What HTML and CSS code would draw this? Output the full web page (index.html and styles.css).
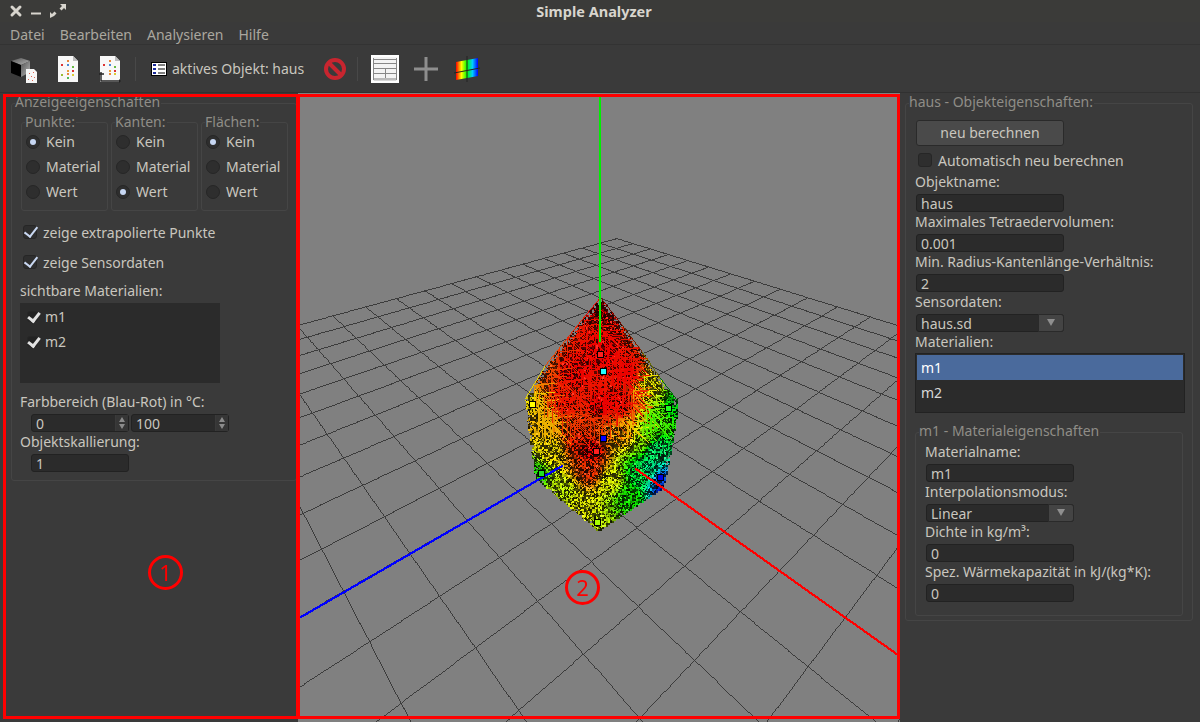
FILE: index.html
```html
<!DOCTYPE html>
<html lang="de">
<head>
    <meta charset="UTF-8">
    <title>Simple Analyzer</title>
    <link rel="stylesheet" href="styles.css">
</head>
<body>

<div class="titlebar">
    <div class="winbtns">
        <svg width="14" height="14" viewBox="0 0 14 14"><path d="M3 3l8 8M11 3l-8 8" stroke="#d8d5ce" stroke-width="3" stroke-linecap="round"/></svg>
        <svg width="14" height="14" viewBox="0 0 14 14"><path d="M2 9.500h10" stroke="#d8d5ce" stroke-width="2"/></svg>
        <svg width="18" height="16" viewBox="0 0 18 16"><path d="M11 1h6v6l-2-2-2.500 2.500-2-2L13 3zM1 15v-6l2 2 2.500-2.500 2 2L5 13z" fill="#d8d5ce"/></svg>
    </div>
    <div class="title">Simple Analyzer</div>
</div>

<div class="menubar">
    <span>Datei</span>
    <span>Bearbeiten</span>
    <span>Analysieren</span>
    <span>Hilfe</span>
</div>

<div class="toolbar">
    <svg class="tool-cube" width="28" height="28" viewBox="0 0 28 28">
        <defs>
            <linearGradient id="cubeTop" x1="0" y1="0" x2="1" y2="1">
                <stop offset="0" stop-color="#555"/>
                <stop offset="1" stop-color="#b5b5b5"/>
            </linearGradient>
        </defs>
        <path d="M1 6l10-3 9 3-9 4z" fill="url(#cubeTop)"/>
        <path d="M1 6l10 4v12L1 18z" fill="#000"/>
        <path d="M11 10l9-4v11l-9 5z" fill="url(#cubeTop)"/>
        <path d="M16 14h8l3 3v11H16z" fill="#f6f6f6"/>
        <path d="M19 18h1v1h-1zM23 17h1v1h-1zM21 21h1v1h-1zM24 22h1v1h-1zM18 24h1v1h-1zM22 25h1v1h-1z" fill="#d65"/>
    </svg>
    <svg class="tool-doc" width="22" height="28" viewBox="0 0 22 28">
        <path d="M1 1h15l5 5v21H1z" fill="#f8f8f8"/>
        <path d="M16 1v5h5z" fill="#bbb"/>
        <g>
            <rect x="10" y="5" width="2" height="2" fill="#e8873a"/><rect x="4" y="9" width="2" height="2" fill="#d33"/>
            <rect x="10" y="9" width="2" height="2" fill="#4a8ad4"/><rect x="15" y="11" width="2" height="2" fill="#6b4"/>
            <rect x="10" y="15" width="2" height="2" fill="#e8a03a"/><rect x="15" y="15" width="2" height="2" fill="#d33"/>
            <rect x="10" y="18" width="2" height="2" fill="#e8873a"/><rect x="4" y="19" width="2" height="2" fill="#9b3"/>
            <rect x="15" y="19" width="2" height="2" fill="#dc3"/><rect x="10" y="22" width="2" height="2" fill="#5b5"/>
        </g>
    </svg>
    <svg class="tool-doc2" width="22" height="28" viewBox="0 0 22 28">
        <path d="M1 1h15l5 5v21H1z" fill="#f8f8f8"/>
        <path d="M16 1v5h5z" fill="#bbb"/>
        <g>
            <rect x="10" y="5" width="2" height="2" fill="#e8873a"/><rect x="4" y="9" width="2" height="2" fill="#d33"/>
            <rect x="10" y="9" width="2" height="2" fill="#4a8ad4"/><rect x="15" y="11" width="2" height="2" fill="#6b4"/>
            <rect x="10" y="15" width="2" height="2" fill="#e8a03a"/><rect x="15" y="15" width="2" height="2" fill="#d33"/>
            <rect x="10" y="18" width="2" height="2" fill="#e8873a"/><rect x="15" y="18" width="2" height="2" fill="#dc3"/>
        </g>
        <path d="M2 17v9h18M0 19h5" stroke="#222" stroke-width="1.400" fill="none"/>
        <path d="M20 24l2 2-2 2z" fill="#222"/>
    </svg>
    <div class="tool-sep sep-a"></div>
    <svg class="tool-list" width="16" height="14" viewBox="0 0 16 14">
        <rect x="0.500" y="0.500" width="15" height="13" fill="#fff" stroke="#000"/>
        <path d="M2 2h3v2H2zM2 6h3v2H2zM2 10h3v2H2z" fill="#1a2a9c"/>
        <path d="M7 3h7M7 7h7M7 11h7" stroke="#000"/>
    </svg>
    <span class="tool-text">aktives Objekt: haus</span>
    <svg class="tool-stop" width="24" height="24" viewBox="0 0 24 24">
        <circle cx="12" cy="12" r="9" fill="none" stroke="#c8252f" stroke-width="4"/>
        <path d="M6 6l12 12" stroke="#c8252f" stroke-width="4"/>
    </svg>
    <div class="tool-sep sep-b"></div>
    <svg class="tool-table" width="28" height="28" viewBox="0 0 28 28">
        <rect x="1" y="1" width="26" height="26" fill="#f4f4f4" stroke="#fff" stroke-width="2"/>
        <path d="M2.500 4.500h23M2.500 8.500h23M2.500 13.500h23M2.500 18.500h23M2.500 23.500h23M14.500 13v11M2.500 3v22M25.500 3v22" stroke="#888" fill="none"/>
        <rect x="3" y="23" width="22" height="2.500" fill="#bbb"/>
    </svg>
    <svg class="tool-plus" width="26" height="26" viewBox="0 0 26 26">
        <path d="M13 1v24M1 13h24" stroke="#8e8e8e" stroke-width="3"/>
    </svg>
    <svg class="tool-color" width="28" height="28" viewBox="0 0 28 28">
        <defs>
            <linearGradient id="spectrum" x1="0" y1="0" x2="1" y2="0">
                <stop offset="0" stop-color="#f00"/>
                <stop offset="0.250" stop-color="#ff0"/>
                <stop offset="0.500" stop-color="#0f0"/>
                <stop offset="0.750" stop-color="#0cf"/>
                <stop offset="1" stop-color="#00f"/>
            </linearGradient>
        </defs>
        <path d="M3 7l22-4v18L3 25z" fill="url(#spectrum)"/>
        <path d="M1 18l26-5M14 1v26" stroke="#222" fill="none"/>
    </svg>
</div>

<div class="main">
    <div class="panel panel-left">
        <div class="group group-display">
            <div class="group-title">Anzeigeeigenschaften</div>
            <div class="radio-groups">
                <div class="group radio-box">
                    <div class="group-title">Punkte:</div>
                    <div class="row-radio"><i class="radio on"></i>Kein</div>
                    <div class="row-radio"><i class="radio"></i>Material</div>
                    <div class="row-radio"><i class="radio"></i>Wert</div>
                </div>
                <div class="group radio-box">
                    <div class="group-title">Kanten:</div>
                    <div class="row-radio"><i class="radio"></i>Kein</div>
                    <div class="row-radio"><i class="radio"></i>Material</div>
                    <div class="row-radio"><i class="radio on"></i>Wert</div>
                </div>
                <div class="group radio-box">
                    <div class="group-title">Flächen:</div>
                    <div class="row-radio"><i class="radio on"></i>Kein</div>
                    <div class="row-radio"><i class="radio"></i>Material</div>
                    <div class="row-radio"><i class="radio"></i>Wert</div>
                </div>
            </div>
            <div class="checks">
                <div class="row-check"><i class="check on"></i>zeige extrapolierte Punkte</div>
                <div class="row-check"><i class="check on"></i>zeige Sensordaten</div>
            </div>
            <div class="label visible-label">sichtbare Materialien:</div>
            <div class="mat-list">
                <div class="mat-item"><i class="check on small"></i>m1</div>
                <div class="mat-item"><i class="check on small"></i>m2</div>
            </div>
            <div class="label range-label">Farbbereich (Blau-Rot) in °C:</div>
            <div class="spin-row">
                <div class="spin"><span>0</span><b class="spin-arrows"></b></div>
                <div class="spin"><span>100</span><b class="spin-arrows"></b></div>
            </div>
            <div class="label">Objektskallierung:</div>
            <div class="field short">1</div>
        </div>
    </div>

    <div class="viewport">
        <canvas id="view" width="602" height="629"></canvas>
    </div>

    <div class="panel panel-right">
        <div class="group group-object">
            <div class="group-title">haus - Objekteigenschaften:</div>
            <div class="button">neu berechnen</div>
            <div class="row-check auto-check"><i class="check"></i>Automatisch neu berechnen</div>
            <div class="label first-label">Objektname:</div>
            <div class="field">haus</div>
            <div class="label">Maximales Tetraedervolumen:</div>
            <div class="field">0.001</div>
            <div class="label">Min. Radius-Kantenlänge-Verhältnis:</div>
            <div class="field">2</div>
            <div class="label">Sensordaten:</div>
            <div class="combo"><span>haus.sd</span><b class="combo-btn"></b></div>
            <div class="label">Materialien:</div>
            <div class="obj-list">
                <div class="obj-item selected">m1</div>
                <div class="obj-item">m2</div>
            </div>
            <div class="group group-material">
                <div class="group-title">m1 - Materialeigenschaften</div>
                <div class="label">Materialname:</div>
                <div class="field">m1</div>
                <div class="label">Interpolationsmodus:</div>
                <div class="combo"><span>Linear</span><b class="combo-btn"></b></div>
                <div class="label">Dichte in kg/m³:</div>
                <div class="field">0</div>
                <div class="label">Spez. Wärmekapazität in kJ/(kg*K):</div>
                <div class="field">0</div>
            </div>
        </div>
    </div>

    <div class="frame frame-one"></div>
    <div class="frame frame-two"></div>
    <div class="mark mark-one">1</div>
    <div class="mark mark-two">2</div>
</div>

<script src="view.js"></script>
</body>
</html>
```

FILE: styles.css
```css
* {
    box-sizing: border-box;
}
html, body {
    margin: 0;
    height: 100%;
    overflow: hidden;
}
body {
    width: 1200px;
    height: 722px;
    font-family: "Noto Sans", "Open Sans", sans-serif;
    font-size: 14px;
    color: #c9c6bf;
    background-color: #3a3a3a;
}
.titlebar {
    display: flex;
    align-items: center;
    position: relative;
    height: 22px;
    background-color: #3b3b39;
}
.winbtns {
    display: flex;
    align-items: center;
    gap: 6px;
    padding-left: 9px;
}
.title {
    position: absolute;
    left: 0;
    right: 12px;
    text-align: center;
    font-weight: bold;
    font-size: 14.5px;
    color: #d8d5ce;
}
.menubar {
    display: flex;
    gap: 15px;
    height: 23px;
    padding: 1px 0 0 10px;
    line-height: 23px;
    color: #aaa79f;
    border-bottom: 1px solid #333;
}
.toolbar {
    display: flex;
    align-items: center;
    height: 48px;
    background-color: #3a3a3a;
    border-bottom: 1px solid #313131;
}
.tool-cube { margin-left: 10px; }
.tool-doc { margin-left: 19px; }
.tool-doc2 { margin-left: 20px; }
.tool-sep {
    width: 1px;
    height: 24px;
    background-color: #484848;
}
.sep-a { margin-left: 14px; }
.tool-list { margin-left: 15px; }
.tool-text {
    margin-left: 5px;
    color: #c9c6bf;
}
.tool-stop { margin-left: 19px; }
.sep-b { margin-left: 10px; }
.tool-table { margin-left: 13px; }
.tool-plus { margin-left: 14px; }
.tool-color { margin-left: 14px; }

.main {
    display: flex;
    position: relative;
    height: 629px;
}
.panel {
    padding-top: 10px;
}
.panel-left {
    width: 298px;
    padding-left: 11px;
    padding-right: 1px;
}
.panel-right {
    width: 300px;
    padding-left: 5px;
    padding-right: 7px;
}
.viewport {
    width: 602px;
    background-color: #808080;
}
#view {
    display: block;
}
.group {
    position: relative;
    border: 1px solid #454545;
    border-radius: 3px;
}
.group-title {
    position: absolute;
    top: -10px;
    left: 3px;
    height: 16px;
    padding-right: 1px;
    line-height: 16px;
    white-space: nowrap;
    color: #8f8d87;
    background-color: #3a3a3a;
}
.radio-box .group-title {
    top: -9px;
}
.group-display {
    height: 378px;
    padding: 18px 0 0 8px;
}
.radio-groups {
    display: flex;
    gap: 3px;
    padding-left: 1px;
}
.radio-box {
    width: 87px;
    height: 89px;
    padding: 6px 0 0 4px;
}
.row-radio {
    display: flex;
    align-items: center;
    gap: 6px;
    height: 25px;
}
.radio {
    position: relative;
    width: 14px;
    height: 14px;
    border: 1px solid #262626;
    border-radius: 50%;
    background-color: #2e2e2e;
}
.radio.on::after {
    content: "";
    position: absolute;
    left: 3px;
    top: 3px;
    width: 6px;
    height: 6px;
    border-radius: 50%;
    background-color: #c6d6f2;
}
.checks {
    margin: 6px 0 0 3px;
}
.row-check {
    display: flex;
    align-items: center;
    gap: 6px;
    height: 30px;
}
.check {
    position: relative;
    width: 14px;
    height: 14px;
    border: 1px solid #262626;
    border-radius: 3px;
    background-color: #2e2e2e;
}
.check.on::after {
    content: "";
    position: absolute;
    left: 3px;
    top: -2px;
    width: 6px;
    height: 11px;
    border: solid #c9d8f2;
    border-width: 0 2px 2px 0;
    transform: rotate(38deg);
}
.check.small {
    width: 11px;
    height: 11px;
    background-color: #222;
}
.check.small::after {
    left: 2px;
    top: -2px;
    width: 5px;
    height: 9px;
    border-color: #e2e2e2;
    border-width: 0 3px 3px 0;
}
.label {
    height: 20px;
    line-height: 20px;
    white-space: nowrap;
}
.visible-label {
    margin-top: 4px;
}
.mat-list {
    width: 200px;
    height: 80px;
    margin-top: 2px;
    padding-top: 1px;
    background-color: #2b2b2b;
}
.mat-item {
    display: flex;
    align-items: center;
    gap: 7px;
    height: 25px;
    padding-left: 7px;
}
.range-label {
    margin-top: 9px;
}
.spin-row {
    display: flex;
    gap: 2px;
    margin: 2px 0 0 11px;
}
.spin, .field, .combo {
    display: flex;
    align-items: center;
    height: 18px;
    background-color: #2b2b2b;
    border: 1px solid #222;
    border-radius: 3px;
}
.spin {
    justify-content: space-between;
    width: 98px;
    padding-left: 4px;
}
.spin-arrows {
    position: relative;
    width: 13px;
    height: 16px;
    border-left: 1px solid #3a3a3a;
    background-color: #363636;
}
.spin-arrows::before, .spin-arrows::after {
    content: "";
    position: absolute;
    left: 3px;
    border: 3px solid transparent;
}
.spin-arrows::before {
    top: -1px;
    border-bottom: 5px solid #8c8c8c;
}
.spin-arrows::after {
    bottom: -1px;
    border-top: 5px solid #8c8c8c;
}
.field {
    width: 148px;
    margin: 2px 0 0 1px;
    padding-left: 4px;
}
.field.short {
    width: 98px;
    margin-left: 11px;
}
.combo {
    justify-content: space-between;
    width: 148px;
    margin: 2px 0 0 1px;
    padding-left: 4px;
}
.combo-btn {
    position: relative;
    width: 26px;
    height: 18px;
    margin-right: -1px;
    background-color: #444;
    border: 1px solid #2a2a2a;
    border-radius: 0 3px 3px 0;
}
.combo-btn::after {
    content: "";
    position: absolute;
    left: 8px;
    top: 4px;
    border: 4px solid transparent;
    border-top: 7px solid #8f8f8f;
    border-bottom: 0;
}
.group-object {
    height: 518px;
    padding: 16px 0 0 9px;
}
.button {
    width: 148px;
    height: 26px;
    margin-left: 1px;
    line-height: 24px;
    text-align: center;
    background-color: #4a4a4a;
    border: 1px solid #2a2a2a;
    border-radius: 3px;
}
.auto-check {
    height: 20px;
    margin: 4px 0 0 3px;
}
.first-label {
    margin-top: 2px;
}
.obj-list {
    width: 270px;
    height: 60px;
    margin-top: 1px;
    padding: 1px;
    background-color: #2b2b2b;
    border: 1px solid #222;
}
.obj-item {
    height: 25px;
    padding-left: 4px;
    line-height: 25px;
    color: #d8d8d8;
}
.obj-item.selected {
    color: #fff;
    background-color: #4a6a9c;
}
.group-material {
    width: 268px;
    height: 184px;
    margin-top: 19px;
    padding: 9px 0 0 9px;
}
.frame {
    position: absolute;
    top: 1px;
    height: 625px;
    border: 3px solid #f00;
}
.frame-one {
    left: 3px;
    width: 296px;
}
.frame-two {
    left: 297px;
    width: 603px;
}
.mark {
    position: absolute;
    width: 35px;
    height: 35px;
    line-height: 29px;
    text-align: center;
    font-size: 22px;
    color: #f00;
    border: 3px solid #f00;
    border-radius: 50%;
}
.mark-one {
    left: 148px;
    top: 462px;
}
.mark-two {
    left: 565px;
    top: 477px;
}
```

FILE: view.js
```js
// 3D-Ansicht: Gitter, Achsen und das gefaerbte Hausmodell
var canvas = document.getElementById("view");
var ctx = canvas.getContext("2d");
var OX = 298, OY = 93; // Versatz der Canvas im Fenster

var seed = 12345;
function rnd() {
    seed = (seed * 1664525 + 1013904223) % 4294967296;
    return seed / 4294967296;
}

function dot(x, y, s, col) {
    ctx.fillStyle = col;
    ctx.fillRect(Math.round(x - OX), Math.round(y - OY), s, s);
}

// Linie ohne Kantenglaettung
function line(x0, y0, x1, y1, s, col) {
    var n = Math.ceil(Math.max(Math.abs(x1 - x0), Math.abs(y1 - y0)));
    for (var i = 0; i <= n; i++) {
        dot(x0 + (x1 - x0) * i / n, y0 + (y1 - y0) * i / n, s, col);
    }
}

// Bodenebene -> Bild
function project(u, v) {
    var w = 1 - 0.0636 * u - 0.056 * v;
    return {
        x: 600 + (33.4 * u - 37 * v) / w,
        y: 443 + (23.7 * u + 21.3 * v) / w,
        w: w
    };
}

function groundLine(u0, v0, u1, v1) {
    var steps = 60, last = null;
    for (var i = 0; i <= steps; i++) {
        var p = project(u0 + (u1 - u0) * i / steps, v0 + (v1 - v0) * i / steps);
        if (p.w < 0.12) break;
        if (last) line(last.x, last.y, p.x, p.y, 1, "#3c3c3c");
        last = p;
    }
}

for (var k = -10; k <= 10; k++) {
    groundLine(-10, k, 10, k);
    groundLine(k, -10, k, 10);
}

var outline = [[600,297],[622,325],[642,352],[660,378],[677,400],[676,420],[669,460],[663,487],[598,531],[585,520],[535,478],[528,430],[525,398],[545,365],[565,340],[585,315]];

function inside(x, y) {
    var c = false;
    for (var i = 0, j = outline.length - 1; i < outline.length; j = i++) {
        var a = outline[i], b = outline[j];
        if ((a[1] > y) != (b[1] > y) && x < (b[0] - a[0]) * (y - a[1]) / (b[1] - a[1]) + a[0]) c = !c;
    }
    return c;
}

function edgeDist(x, y) {
    var best = 1e9;
    for (var i = 0, j = outline.length - 1; i < outline.length; j = i++) {
        var a = outline[i], b = outline[j];
        var dx = b[0] - a[0], dy = b[1] - a[1];
        var t = Math.max(0, Math.min(1, ((x - a[0]) * dx + (y - a[1]) * dy) / (dx * dx + dy * dy)));
        best = Math.min(best, Math.hypot(x - a[0] - t * dx, y - a[1] - t * dy));
    }
    return best;
}

// Stuetzstellen der Farbskala: x, y, Farbton
var anchors = [
    [600,297,0],[600,350,0],[600,400,0],[590,450,0],[590,470,12],[570,370,0],[625,370,0],[560,400,4],[620,400,2],
    [545,365,18],[575,440,8],[525,400,55],[540,420,45],[550,450,55],[533,473,112],[560,490,72],[597,530,72],[580,510,62],
    [663,490,235],[660,478,220],[650,470,155],[640,475,135],[630,495,115],[655,450,145],
    [677,405,125],[640,440,85],[655,420,105],[625,435,40],[610,480,65],[645,385,60]
];

function hue(x, y) {
    var sum = 0, weight = 0;
    for (var i = 0; i < anchors.length; i++) {
        var d = Math.pow(x - anchors[i][0], 2) + Math.pow(y - anchors[i][1], 2) + 1;
        var g = 1 / Math.pow(d, 1.8);
        sum += anchors[i][2] * g;
        weight += g;
    }
    return sum / weight;
}

for (var y = 297; y < 532; y += 2) {
    for (var x = 524; x < 679; x += 2) {
        if (!inside(x, y)) continue;
        var d = edgeDist(x, y);
        var roof = y < 400 - Math.abs(x - 600) * 0.1;
        if (d < 3 && rnd() < (roof ? 0.6 : 0.15)) continue;
        var light = rnd() < 0.5 ? 4 + rnd() * 14 : 28 + rnd() * 24;
        if (roof) light = rnd() < 0.3 ? 42 + rnd() * 8 : 10 + rnd() * 14;
        if (x > 625 && y < 400) light *= 0.7;
        if (y < 325) light *= 0.6;
        if (rnd() < 0.04) light = 58;
        dot(x, y, 2, "hsl(" + hue(x, y).toFixed(0) + ",100%," + light.toFixed(0) + "%)");
    }
}

// feine Punkte wie im gerasterten Netz
for (var n = 0; n < 9000; n++) {
    var sx = 525 + rnd() * 152, sy = 297 + rnd() * 234;
    if (!inside(sx, sy)) continue;
    var bright = rnd() < 0.5 ? 8 : 48;
    dot(sx, sy, 1, "hsl(" + hue(sx, sy).toFixed(0) + ",100%," + bright + "%)");
}

// Drahtgitter im Dachbereich
for (var i = 0; i < 320; i++) {
    var px = 530 + rnd() * 140, py = 300 + rnd() * 130;
    var size = 8 + Math.floor(rnd() * 3) * 6;
    if (!inside(px, py) || !inside(px + size, py) || !inside(px, py + size)) continue;
    var col = "hsl(" + hue(px, py).toFixed(0) + ",100%,46%)";
    line(px, py, px + size, py - size * 0.1, 1, col);
    line(px, py, px, py + size, 1, col);
    line(px, py, px + size, py + size, 1, col);
}

// Kontur des Dachs
for (var e = 0; e < 5; e++) {
    var s0 = e == 0 ? outline[15] : outline[e - 1];
    var s1 = outline[e];
    line(s0[0], s0[1], s1[0], s1[1], 1, "hsl(" + hue(s1[0], s1[1]).toFixed(0) + ",100%,22%)");
}
for (var e2 = 12; e2 < 16; e2++) {
    var a0 = outline[e2], a1 = outline[(e2 + 1) % 16];
    line(a0[0], a0[1], a1[0], a1[1], 1, "hsl(" + hue(a0[0], a0[1]).toFixed(0) + ",100%,46%)");
}

line(599, 97, 599, 340, 2, "#00f000");
line(300, 616, 561, 465, 2, "#0000ff");
line(635, 468, 897, 654, 2, "#ff0000");

var markers = [
    [600,354,"#ff2020"],[603,371,"#20ffff"],[532,404,"#ffff00"],[668,408,"#20ff20"],
    [603,438,"#0000ff"],[596,451,"#ff2020"],[541,473,"#20e020"],[660,477,"#0000e0"],[597,522,"#aaff00"]
];
markers.forEach(function (m) {
    dot(m[0] - 3, m[1] - 3, 7, "#000");
    dot(m[0] - 2, m[1] - 2, 5, m[2]);
});
```
